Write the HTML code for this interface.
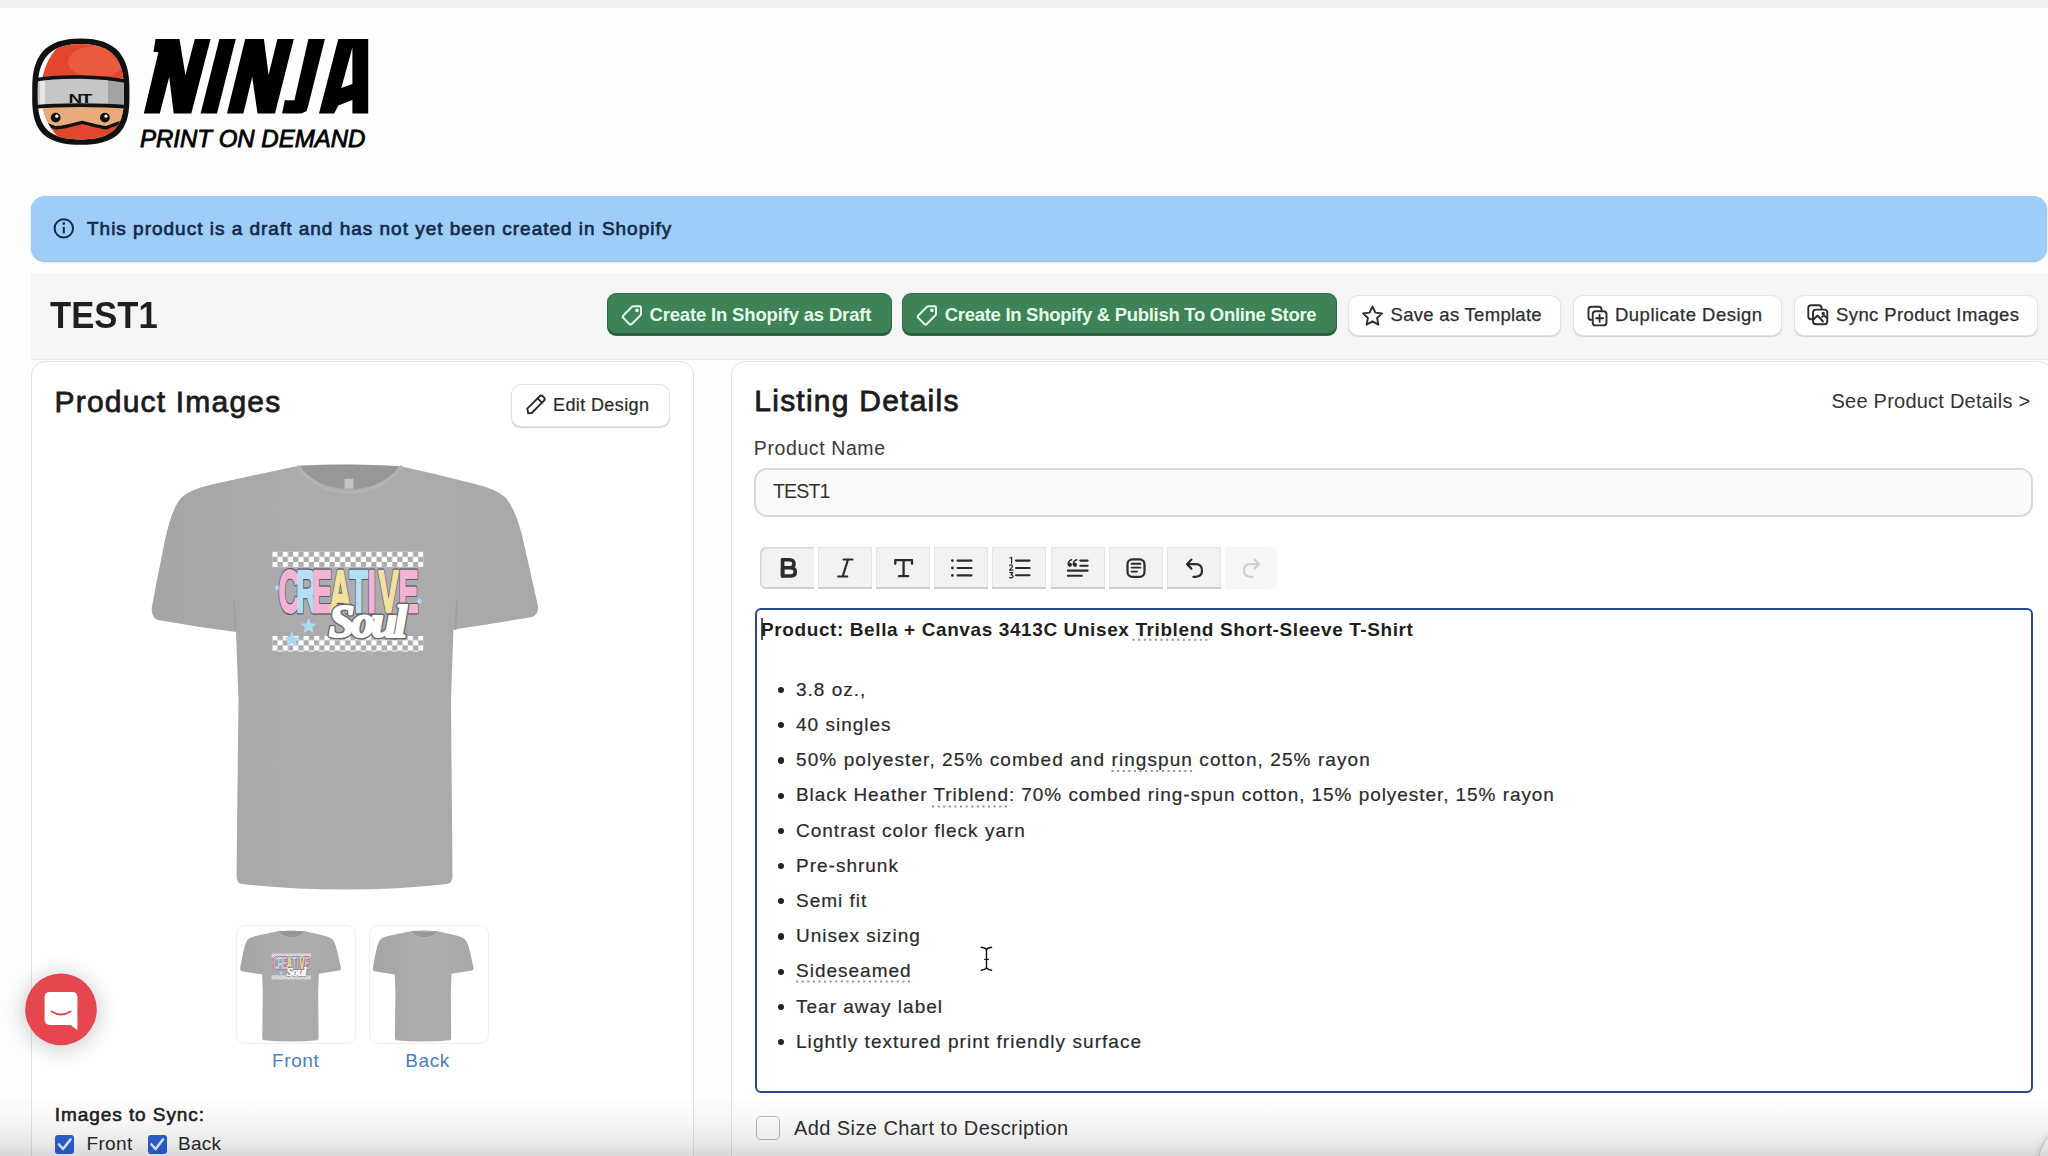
<!DOCTYPE html>
<html><head><meta charset="utf-8">
<style>
html,body{margin:0;padding:0;width:2048px;height:1156px;overflow:hidden;background:#fdfdfd;font-family:"Liberation Sans",sans-serif;}
.a{position:absolute;box-sizing:border-box;}
.t{position:absolute;white-space:nowrap;line-height:1;}
svg{position:absolute;overflow:visible;}
.gb{position:absolute;box-sizing:border-box;background:#3e8358;border-radius:8px;box-shadow:inset 0 -2px 0 #2a5e3e, 0 0 0 1px #2f6a45;}
.wb{position:absolute;box-sizing:border-box;background:#fff;border-radius:9px;box-shadow:0 0 0 1px #e3e3e3, 0 1.5px 1px 0.5px #d4d4d4;}
.gt{color:#e4f9e8;font-weight:700;font-size:18.5px;top:305.6px;}
.wt{color:#2e2e2e;font-size:18.5px;top:305.6px;-webkit-text-stroke:0.25px #2e2e2e;}
.tb{position:absolute;box-sizing:border-box;top:547px;width:54px;height:42px;background:#f1f2f4;box-shadow:inset 0 -2px 0 #cdcfd2, inset 0 0 0 1px #e5e6e8;}
.bl{color:#2b2b2b;font-size:19px;letter-spacing:1.0px;-webkit-text-stroke:0.2px #2b2b2b;}
.dot{position:absolute;width:6.2px;height:6.2px;border-radius:50%;background:#222;left:777.9px;}
.sp{position:absolute;height:0;border-bottom:1.5px dotted #f2a9a9;}
</style></head><body>
<!-- top strip -->
<div class="a" style="left:0;top:0;width:2048px;height:8px;background:#efefef"></div>

<!-- logo -->
<svg style="left:0;top:0" width="400" height="160" viewBox="0 0 400 160">
  <defs>
    <clipPath id="hc"><path d="M80.7 44 C112 44 123.8 60 123.8 88 L123.8 100 C123.8 128 111 139.4 80.7 139.4 C50 139.4 37.8 128 37.8 100 L37.8 88 C37.8 60 49 44 80.7 44 Z"/></clipPath>
    <clipPath id="rc"><ellipse cx="87" cy="92" rx="46" ry="58"/></clipPath>
  </defs>
  <path d="M80.7 38.6 C117 38.6 129.4 57 129.4 88 L129.4 100 C129.4 132 115 144.8 80.7 144.8 C46 144.8 32.2 132 32.2 100 L32.2 88 C32.2 57 44 38.6 80.7 38.6 Z" fill="#111"/>
  <g clip-path="url(#hc)">
    <rect x="30" y="38" width="100" height="110" fill="#fff"/>
    <g clip-path="url(#rc)">
      <rect x="30" y="38" width="100" height="110" fill="#e2462c"/>
      <ellipse cx="96" cy="62" rx="28" ry="16" fill="#ea5a3d"/>
      <path d="M30 104 L130 104 L130 122 C118 121.5 112 126 106 127.8 C98 127 90 124 82 122.4 C76 124 66 127.5 56 127.8 C50 126 44 122 30 122 Z" fill="#e8ab7c"/>
      <path d="M30 122 C44 122 50 126 56 127.8 C66 127.5 76 124 82 122.4 C90 124 98 127 106 127.8 C112 126 118 121.5 130 122" fill="none" stroke="#111" stroke-width="3.4"/>
    </g>
    <path d="M34 80 C60 75.5 100 76 128 81.5 L128 107 C100 104.5 60 104.5 34 107 Z" fill="#c6c6c6"/>
    <rect x="108" y="78" width="20" height="28" fill="#a3a3a3"/>
    <rect x="40" y="80" width="5" height="26" fill="#e6e6e6"/>
  </g>
  <path d="M34 80 C60 75.5 100 76 128 81.5 M34 107 C60 104.5 100 104.5 128 107" fill="none" stroke="#111" stroke-width="3.6"/>
  <text transform="translate(79.8,103.4) scale(1.45,1)" x="0" y="0" font-family="Liberation Sans" font-weight="700" font-size="13" text-anchor="middle" fill="#111" letter-spacing="-0.8">NT</text>
  <circle cx="55.7" cy="117.6" r="4.9" fill="#111"/><circle cx="56.8" cy="116.2" r="1.6" fill="#fff"/>
  <circle cx="104.9" cy="117.6" r="4.9" fill="#111"/><circle cx="106" cy="116.2" r="1.6" fill="#fff"/>
  <g fill="#000">
    <polygon points="155.5,39.1 179.5,39.1 185.4,75.1 194.8,39.1 210.6,39.1 191.3,113.4 173.7,113.4 169.2,76.9 159.8,113.4 143.8,113.4 158.4,52.3 153.5,51.7"/>
    <polygon points="219.4,39.1 235.8,39.1 217.0,113.4 200.6,113.4"/>
    <polygon points="245.2,39.1 263.9,39.1 268.6,75.1 277.4,39.1 293.8,39.1 275.0,113.4 257.5,113.4 252.2,76.9 243.4,113.4 227.0,113.4"/>
    <polygon points="308.4,39.1 324.9,39.1 308.4,105.0 306.7,110.9 301.4,113.4 282.1,113.4 284.8,100.3 294.4,100.3"/>
    <path fill-rule="evenodd" d="M338.3,39.1 L368.2,39.1 L368.2,113.4 L352.4,113.4 L352.4,100.1 L338.3,105.6 L334.2,113.4 L319.0,113.4 Z M352.4,47.6 L352.4,83.9 L341.3,88.0 Z"/>
  </g>
  <text x="140" y="146.6" font-family="Liberation Sans" font-style="italic" font-weight="400" font-size="24" fill="#000" stroke="#000" stroke-width="0.8" letter-spacing="0">PRINT ON DEMAND</text>
</svg>

<!-- banner -->
<div class="a" style="left:31px;top:196px;width:2016px;height:65px;background:#9ecdf7;border-radius:14px;box-shadow:0 1px 1.5px rgba(40,70,110,.45)"></div>
<svg style="left:0;top:0" width="2048" height="1156" viewBox="0 0 2048 1156">
  <circle cx="63.8" cy="228.4" r="9.2" fill="none" stroke="#12294a" stroke-width="2"/>
  <circle cx="63.8" cy="223.6" r="1.3" fill="#12294a"/>
  <line x1="63.8" y1="226.8" x2="63.8" y2="233.4" stroke="#12294a" stroke-width="2"/>
</svg>
<div class="t" style="left:87px;top:218.85px;font-size:19px;font-weight:400;color:#12294a;letter-spacing:0.99px;-webkit-text-stroke:0.65px #12294a">This product is a draft and has not yet been created in Shopify</div>

<!-- header gray bar -->
<div class="a" style="left:31px;top:273px;width:2017px;height:86px;background:#f5f5f5;box-shadow:0 1px 0 #e6e6e6"></div>
<div class="t" style="left:50px;top:297.35px;font-size:37px;font-weight:700;color:#1f1f1f;letter-spacing:0px;transform:scaleX(0.935);transform-origin:0 0">TEST1</div>

<div class="gb" style="left:608px;top:294px;width:283px;height:41px"></div>
<div class="t gt" style="left:649.5px;letter-spacing:-0.17px">Create In Shopify as Draft</div>
<div class="gb" style="left:903px;top:294px;width:433px;height:41px"></div>
<div class="t gt" style="left:944.7px;letter-spacing:-0.29px">Create In Shopify &amp; Publish To Online Store</div>

<div class="wb" style="left:1349px;top:295.5px;width:211px;height:39px"></div>
<div class="t wt" style="left:1390.6px;letter-spacing:0.29px">Save as Template</div>
<div class="wb" style="left:1574px;top:295.5px;width:206.5px;height:39px"></div>
<div class="t wt" style="left:1615px;letter-spacing:0.48px">Duplicate Design</div>
<div class="wb" style="left:1795px;top:295.5px;width:242px;height:39px"></div>
<div class="t wt" style="left:1836px;letter-spacing:0.40px">Sync Product Images</div>

<!-- cards -->
<div class="a" style="left:31px;top:361px;width:663px;height:820px;border:1.5px solid #e3e3e3;border-radius:14px;background:#fff"></div>
<div class="a" style="left:731px;top:361px;width:1321px;height:820px;border:1.5px solid #e3e3e3;border-radius:14px;background:#fff"></div>

<!-- left card content -->
<div class="t" style="left:54.5px;top:386.7px;font-size:30px;font-weight:400;color:#1c1c1c;letter-spacing:1.2px;-webkit-text-stroke:0.8px #1c1c1c">Product Images</div>
<div class="wb" style="left:512px;top:384.5px;width:157px;height:41px"></div>
<div class="t" style="left:553px;top:395.6px;font-size:18px;color:#2a2a2a;letter-spacing:0.39px;-webkit-text-stroke:0.2px #2a2a2a">Edit Design</div>

<!-- shirt -->
<svg style="left:0;top:0" width="700" height="1156" viewBox="0 0 700 1156">
  <defs>
    <pattern id="chk" x="272.3" y="551.6" width="10.42" height="10.42" patternUnits="userSpaceOnUse">
      <rect x="0" y="0" width="5.21" height="5.21" fill="#fff"/>
      <rect x="5.21" y="5.21" width="5.21" height="5.21" fill="#fff"/>
    </pattern>
    <linearGradient id="shg" x1="0" y1="0" x2="1" y2="0">
      <stop offset="0" stop-color="#a5a5a7"/>
      <stop offset="0.5" stop-color="#adadaf"/>
      <stop offset="1" stop-color="#a8a8aa"/>
    </linearGradient>
    <g id="shirtbody">
      <path d="M297.4 466 Q350 463.5 399.6 466 L435 474 L475 484 Q496 489 505 497 Q515 508 522 535 L531 575 L538 606 Q539 614 532 617 L490 624 L453.5 629.5 L451 700 L452.5 876 Q452.5 883 447 884 Q400 889.5 344 889.5 Q290 889.5 242 884 Q236.5 883 236.5 876 L238.5 700 L236 632 L200 627 L158 620 Q151 618 151.8 607 L157 580 L165 540 Q172 507 182 497 Q191 489 214 484 L260 474 Z" fill="url(#shg)"/>
      <path d="M299.5 465.8 Q350 463 399.7 466.4 Q380 490 347.9 489 Q315 488 299.5 465.8 Z" fill="#979797"/>
      <path d="M297 466 Q318 492 347.9 492 Q382 492 402 466" fill="none" stroke="#b3b3b3" stroke-width="3"/>
      <path d="M235.4 630 L234 600 M455.4 630 L457 600" fill="none" stroke="#a0a0a0" stroke-width="2"/>
    </g>
    <g id="design">
  <!-- design -->
  <rect x="272.3" y="551.6" width="151.1" height="15.63" fill="url(#chk)"/>
  <rect x="272.3" y="635.96" width="151.1" height="15.63" fill="url(#chk)"/>
  <g font-family="Liberation Sans" font-weight="700" font-size="60">
    <g transform="translate(278.5,611.5) scale(0.5,1)" stroke="#59596a" stroke-width="5" stroke-linejoin="round">
      <text x="0" y="0">C</text><text x="35" y="0">R</text><text x="67" y="0">E</text><text x="102" y="0">A</text><text x="142" y="0">T</text><text x="178" y="0">I</text><text x="200" y="0">V</text><text x="240" y="0">E</text>
    </g>
    <g transform="translate(278.5,611.5) scale(0.5,1)" stroke-width="2.6" stroke-linejoin="round">
      <text x="0" y="0" fill="#f3b3d4" stroke="#f3b3d4">C</text>
      <text x="35" y="0" fill="#b4def3" stroke="#b4def3">R</text>
      <text x="67" y="0" fill="#f3b3d4" stroke="#f3b3d4">E</text>
      <text x="102" y="0" fill="#f3e19e" stroke="#f3e19e">A</text>
      <text x="142" y="0" fill="#b4def3" stroke="#b4def3">T</text>
      <text x="178" y="0" fill="#f3b3d4" stroke="#f3b3d4">I</text>
      <text x="200" y="0" fill="#f3e19e" stroke="#f3e19e">V</text>
      <text x="240" y="0" fill="#f3b3d4" stroke="#f3b3d4">E</text>
    </g>
  </g>
  <text x="329" y="637" font-family="Liberation Serif" font-style="italic" font-weight="700" font-size="46" fill="#fff" stroke="#6a6a6a" stroke-width="5" stroke-linejoin="round" letter-spacing="-3">Soul</text>
  <text x="329" y="637" font-family="Liberation Serif" font-style="italic" font-weight="700" font-size="46" fill="#fff" stroke="#fff" stroke-width="2.2" stroke-linejoin="round" letter-spacing="-3">Soul</text>
  <g fill="#a9dcf4">
    <path transform="translate(308.6,626.1)" d="M0 -8 L2.3 -2.6 L8 -2.4 L3.6 1.2 L5 7 L0 3.8 L-5 7 L-3.6 1.2 L-8 -2.4 L-2.3 -2.6 Z"/>
    <path transform="translate(292,639.6)" d="M0 -8 L2.3 -2.6 L8 -2.4 L3.6 1.2 L5 7 L0 3.8 L-5 7 L-3.6 1.2 L-8 -2.4 L-2.3 -2.6 Z"/>
    <path d="M276.9 584.5 L279.5 587.7 L276.9 590.9 L274.3 587.7 Z"/>
    <path d="M419.6 598 L422.2 601.2 L419.6 604.4 L417 601.2 Z"/>
  </g>
    </g>
  </defs>
  <use href="#shirtbody"/>
  <rect x="344.5" y="478.7" width="9" height="10" fill="#c5c5c5"/>
  <use href="#design"/>
  <!-- thumbnails -->
  <g transform="translate(200.6,809.6) scale(0.2608)">
    <use href="#shirtbody"/>
    <use href="#design"/>
  </g>
  <g transform="translate(333.2,809.6) scale(0.2608)">
    <use href="#shirtbody"/>
    <path d="M299.5 465.8 Q350 463 399.7 466.4 Q350 476 299.5 465.8 Z" fill="#a6a6a6"/>
  </g>
</svg>

<!-- thumbnails -->
<div class="a" style="left:236px;top:924.5px;width:120px;height:119px;border:1.5px solid #efefef;border-radius:9px"></div>
<div class="a" style="left:369px;top:924.5px;width:120px;height:119px;border:1.5px solid #efefef;border-radius:9px"></div>
<div class="t" style="left:272px;top:1050.85px;font-size:19px;color:#4a7fc5;letter-spacing:0.61px">Front</div>
<div class="t" style="left:405.3px;top:1050.85px;font-size:19px;color:#4a7fc5;letter-spacing:0.58px">Back</div>

<div class="t" style="left:54.8px;top:1104.65px;font-size:19px;font-weight:400;color:#1f1f1f;letter-spacing:0.93px;-webkit-text-stroke:0.6px #1f1f1f">Images to Sync:</div>
<div class="a" style="left:55px;top:1135px;width:19px;height:19px;border-radius:3px;background:#2c63d8"></div>
<div class="a" style="left:147.5px;top:1135px;width:19px;height:19px;border-radius:3px;background:#2c63d8"></div>
<svg style="left:0;top:0" width="2048" height="1156" viewBox="0 0 2048 1156">
  <path d="M59 1144.5 L63 1149 L70.5 1139.5" fill="none" stroke="#e8f2ff" stroke-width="2.6" stroke-linecap="round" stroke-linejoin="round"/>
  <path d="M151.5 1144.5 L155.5 1149 L163 1139.5" fill="none" stroke="#e8f2ff" stroke-width="2.6" stroke-linecap="round" stroke-linejoin="round"/>
</svg>
<div class="t" style="left:86.4px;top:1133.85px;font-size:19px;color:#2a2a2a;letter-spacing:0.39px">Front</div>
<div class="t" style="left:178.1px;top:1133.85px;font-size:19px;color:#2a2a2a;letter-spacing:0.25px">Back</div>

<!-- right card content -->
<div class="t" style="left:754.3px;top:386.1px;font-size:30px;font-weight:400;color:#1c1c1c;letter-spacing:1.24px;-webkit-text-stroke:0.8px #1c1c1c">Listing Details</div>
<div class="t" style="left:1831.5px;top:391.4px;font-size:20px;color:#333;letter-spacing:0.23px">See Product Details &gt;</div>
<div class="t" style="left:753.8px;top:438.6px;font-size:19.5px;color:#3a3a3a;letter-spacing:0.6px">Product Name</div>
<div class="a" style="left:754px;top:468px;width:1279px;height:48.5px;border:2px solid #d9d9d9;border-radius:13px;background:#fafafa"></div>
<div class="t" style="left:773px;top:482.4px;font-size:19.6px;color:#333;letter-spacing:-0.9px">TEST1</div>

<!-- toolbar -->
<div class="tb" style="left:760px;border-radius:6px 0 0 6px;box-shadow:inset 1.5px 1.5px 0 #d6d7d9, inset 0 -2px 0 #cdcfd2"></div>
<div class="tb" style="left:818px"></div>
<div class="tb" style="left:876px"></div>
<div class="tb" style="left:934px"></div>
<div class="tb" style="left:992px"></div>
<div class="tb" style="left:1050.5px"></div>
<div class="tb" style="left:1108.5px"></div>
<div class="tb" style="left:1166.5px"></div>
<div class="tb" style="left:1225px;width:52px;background:#f6f6f7;box-shadow:none;border-radius:0 8px 8px 0"></div>

<!-- editor -->
<div class="a" style="left:755px;top:608px;width:1278px;height:485px;border:2px solid #27488e;border-radius:6px;background:#fff"></div>
<div class="a" style="left:761px;top:618px;width:1.5px;height:22px;background:#555"></div>
<div class="t" style="left:761px;top:619.75px;font-size:19px;font-weight:700;color:#1f1f1f;letter-spacing:0.6px">Product: Bella + Canvas 3413C Unisex Triblend Short-Sleeve T-Shirt</div>

<div class="dot" style="top:687.0px"></div><div class="t bl" style="left:796px;top:679.85px">3.8 oz.,</div>
<div class="dot" style="top:722.2px"></div><div class="t bl" style="left:796px;top:715.05px">40 singles</div>
<div class="dot" style="top:757.4px"></div><div class="t bl" style="left:796px;top:750.25px;letter-spacing:1.08px">50% polyester, 25% combed and ringspun cotton, 25% rayon</div>
<div class="dot" style="top:792.6px"></div><div class="t bl" style="left:796px;top:785.45px;letter-spacing:0.94px">Black Heather Triblend: 70% combed ring-spun cotton, 15% polyester, 15% rayon</div>
<div class="dot" style="top:827.8px"></div><div class="t bl" style="left:796px;top:820.65px">Contrast color fleck yarn</div>
<div class="dot" style="top:863.0px"></div><div class="t bl" style="left:796px;top:855.85px">Pre-shrunk</div>
<div class="dot" style="top:898.2px"></div><div class="t bl" style="left:796px;top:891.05px">Semi fit</div>
<div class="dot" style="top:933.4px"></div><div class="t bl" style="left:796px;top:926.25px">Unisex sizing</div>
<div class="dot" style="top:968.6px"></div><div class="t bl" style="left:796px;top:961.45px">Sideseamed</div>
<div class="dot" style="top:1003.8px"></div><div class="t bl" style="left:796px;top:996.65px">Tear away label</div>
<div class="dot" style="top:1039.0px"></div><div class="t bl" style="left:796px;top:1031.85px;letter-spacing:1.05px">Lightly textured print friendly surface</div>
<svg style="left:0;top:0" width="2048" height="1156" viewBox="0 0 2048 1156"><g stroke="#a48f96" stroke-width="2.1" stroke-dasharray="2.1 3.5" fill="none">
<path d="M1132.5 639.8 H1211"/>
<path d="M1111.5 771 H1193"/>
<path d="M932 806.5 H1008"/>
<path d="M796 981.5 H911"/>
</g></svg>
<div class="a" style="left:756px;top:1116px;width:24px;height:24px;border:1.5px solid #b9b9b9;border-radius:5px;background:#fff"></div>
<div class="t" style="left:794px;top:1118.1px;font-size:20px;color:#2f2f2f;letter-spacing:0.42px">Add Size Chart to Description</div>

<!-- icons -->
<svg style="left:0;top:0" width="2048" height="1156" viewBox="0 0 2048 1156">
  <g fill="none" stroke="#e4f9e8" stroke-width="2" stroke-linejoin="round" stroke-linecap="round">
    <path transform="translate(622,305)" d="M11.2 1.3 L17.6 1.3 Q19 1.3 19 2.7 L19 9.1 Q19 9.8 18.5 10.3 L9.8 19 Q8.6 20.2 7.4 19 L1.3 12.9 Q0.1 11.7 1.3 10.5 L10 1.8 Q10.5 1.3 11.2 1.3 Z"/>
    <circle transform="translate(622,305)" cx="15" cy="5.3" r="0.9"/>
    <path transform="translate(917,305)" d="M11.2 1.3 L17.6 1.3 Q19 1.3 19 2.7 L19 9.1 Q19 9.8 18.5 10.3 L9.8 19 Q8.6 20.2 7.4 19 L1.3 12.9 Q0.1 11.7 1.3 10.5 L10 1.8 Q10.5 1.3 11.2 1.3 Z"/>
    <circle transform="translate(917,305)" cx="15" cy="5.3" r="0.9"/>
  </g>
  <g fill="none" stroke="#2e2e2e" stroke-width="1.9" stroke-linejoin="round" stroke-linecap="round">
    <!-- star -->
    <path d="M1372.5 306.5 L1375.4 312.6 L1382 313.4 L1377.1 318 L1378.4 324.6 L1372.5 321.3 L1366.6 324.6 L1367.9 318 L1363 313.4 L1369.6 312.6 Z"/>
    <!-- duplicate -->
    <path d="M1601.5 310 L1601.5 309.5 Q1601.5 306.8 1598.8 306.8 L1591.2 306.8 Q1588.5 306.8 1588.5 309.5 L1588.5 317.2 Q1588.5 319.9 1591.2 319.9 L1592.5 319.9"/>
    <rect x="1592.7" y="311.2" width="13.8" height="14.2" rx="3"/>
    <path d="M1599.6 314.8 V321.8 M1596.1 318.3 H1603.1"/>
    <!-- sync images -->
    <path d="M1821.5 309 L1821.5 308 Q1821.5 305.3 1818.8 305.3 L1811 305.3 Q1808.3 305.3 1808.3 308 L1808.3 316.5 Q1808.3 319.2 1811 319.2 L1812.5 319.2"/>
    <rect x="1813" y="309.6" width="14.3" height="14.6" rx="3"/>
    <path d="M1813.5 319.5 L1817.5 315.5 L1823 321.5 M1822 317 L1824 315.5 L1827 318"/>
    <circle cx="1823.2" cy="313.4" r="0.8"/>
  </g>
  <!-- pencil -->
  <g fill="none" stroke="#2a2a2a" stroke-width="1.9" stroke-linejoin="round" stroke-linecap="round">
    <path d="M528.2 413.2 L527.3 408.6 L539.6 396.3 Q541.3 394.8 542.9 396.3 L544 397.4 Q545.5 399 544 400.7 L531.7 413 Z"/>
    <path d="M537.6 398.3 L542 402.7"/>
  </g>
  <!-- toolbar icons -->
  <g fill="none" stroke="#2b2b2b" stroke-linecap="round" stroke-linejoin="round">
    <path d="M782.6 559.8 H789.2 Q794 559.8 794 564 Q794 567.8 789.2 567.8 H782.6 V576 H790 Q795.3 576 795.3 571.9 Q795.3 567.8 790 567.8" stroke-width="3.6"/>
    <path d="M782.6 559.8 V576" stroke-width="3.6"/>
    <path d="M843.5 559.5 H852.5 M838.2 576.5 H847.2 M848 559.5 L842.7 576.5" stroke-width="2.2"/>
    <path d="M895.3 563.8 V560.2 H912 V563.8 M903.6 560.2 V576.2 M899 576.2 H908.2" stroke-width="2.3"/>
    <circle cx="952.4" cy="560.6" r="1.4" fill="#2b2b2b" stroke="none"/>
    <circle cx="952.4" cy="568" r="1.4" fill="#2b2b2b" stroke="none"/>
    <circle cx="952.4" cy="575.4" r="1.4" fill="#2b2b2b" stroke="none"/>
    <path d="M957.5 560.6 H971.5 M957.5 568 H971.5 M957.5 575.4 H971.5" stroke-width="2.1"/>
    <path d="M1016 560.6 H1029.6 M1016 568 H1029.6 M1016 575.3 H1029.6" stroke-width="2.1"/>
    <path d="M1010 558 L1011.6 557.3 V563.2 M1009.6 565.6 Q1010.3 564.6 1011.3 564.8 Q1013 565.2 1012 567.4 L1009.6 570.2 H1013 M1009.8 572.6 H1012.8 L1011 574.8 Q1013.2 574.8 1013 576.6 Q1012.6 578.3 1009.6 577.6" stroke-width="1.2"/>
    <path d="M1080.3 560.6 H1087.6 M1080.3 565.8 H1087.6 M1067.8 570.6 H1087.6 M1067.8 575.8 H1081.8" stroke-width="2.1"/>
    <circle cx="1069.9" cy="564.8" r="2.1" fill="#2b2b2b" stroke="none"/><circle cx="1075" cy="564.8" r="2.1" fill="#2b2b2b" stroke="none"/><path d="M1068.2 564.8 Q1068.2 560.6 1071.6 559.8 M1073.3 564.8 Q1073.3 560.6 1076.7 559.8" stroke-width="1.5"/>
    <rect x="1127.5" y="559.4" width="17" height="17.4" rx="4.8" stroke-width="2.2"/>
    <path d="M1131.6 563.8 H1140.4 M1131.6 567.6 H1140.4 M1131.6 571.6 H1137" stroke-width="1.9"/>
    <path d="M1191.4 559.6 L1187 564.2 L1191.4 568.6 M1187.4 564.2 H1195.6 Q1202 564.2 1202 570.6 Q1202 576.8 1195.6 576.8 H1193.4" stroke-width="2.2"/>
  </g>
  <path d="M1254.6 559.6 L1259 564.2 L1254.6 568.6 M1258.6 564.2 H1250.4 Q1244 564.2 1244 570.6 Q1244 576.8 1250.4 576.8 H1252.6" fill="none" stroke="#cfcfd0" stroke-width="2.2" stroke-linecap="round" stroke-linejoin="round"/>
  <!-- ibeam cursor -->
  <path d="M981.3 947.3 Q986.5 948 986.5 950.5 Q986.5 948 991.6 947.3 M986.5 950.5 V967 M981.3 970.2 Q986.5 969.5 986.5 967 Q986.5 969.5 991.6 970.2 M984.8 959.4 H988.2" fill="none" stroke="#151515" stroke-width="1.4" stroke-linecap="round"/>
  <!-- chat bubble -->
  <defs><filter id="blr" x="-50%" y="-50%" width="200%" height="200%"><feGaussianBlur stdDeviation="10"/></filter></defs>
  <circle cx="61" cy="1012" r="40" fill="#000" opacity="0.16" filter="url(#blr)"/>
  <circle cx="61" cy="1009.4" r="35.8" fill="#e6474e"/>
  <path d="M50 992 H72 Q77.4 992 77.4 997.4 V1030 L70.5 1025 H50 Q44.6 1025 44.6 1019.6 V997.4 Q44.6 992 50 992 Z" fill="#fff"/>
  <path d="M51.5 1011.5 Q61 1017.5 70.5 1011.5" fill="none" stroke="#e6474e" stroke-width="2" stroke-linecap="round"/>
</svg>

<!-- bottom shade -->
<div class="a" style="left:2036px;top:1116px;width:108px;height:108px;border-radius:50%;background:#fff;border:1.5px solid #cfcfcf;box-shadow:0 0 8px rgba(0,0,0,.12)"></div>
<div class="a" style="left:0;top:1096px;width:2048px;height:60px;background:linear-gradient(to bottom,rgba(0,0,0,0),rgba(0,0,0,0.03) 40%,rgba(0,0,0,0.08) 75%,rgba(0,0,0,0.15))"></div>
</body></html>
